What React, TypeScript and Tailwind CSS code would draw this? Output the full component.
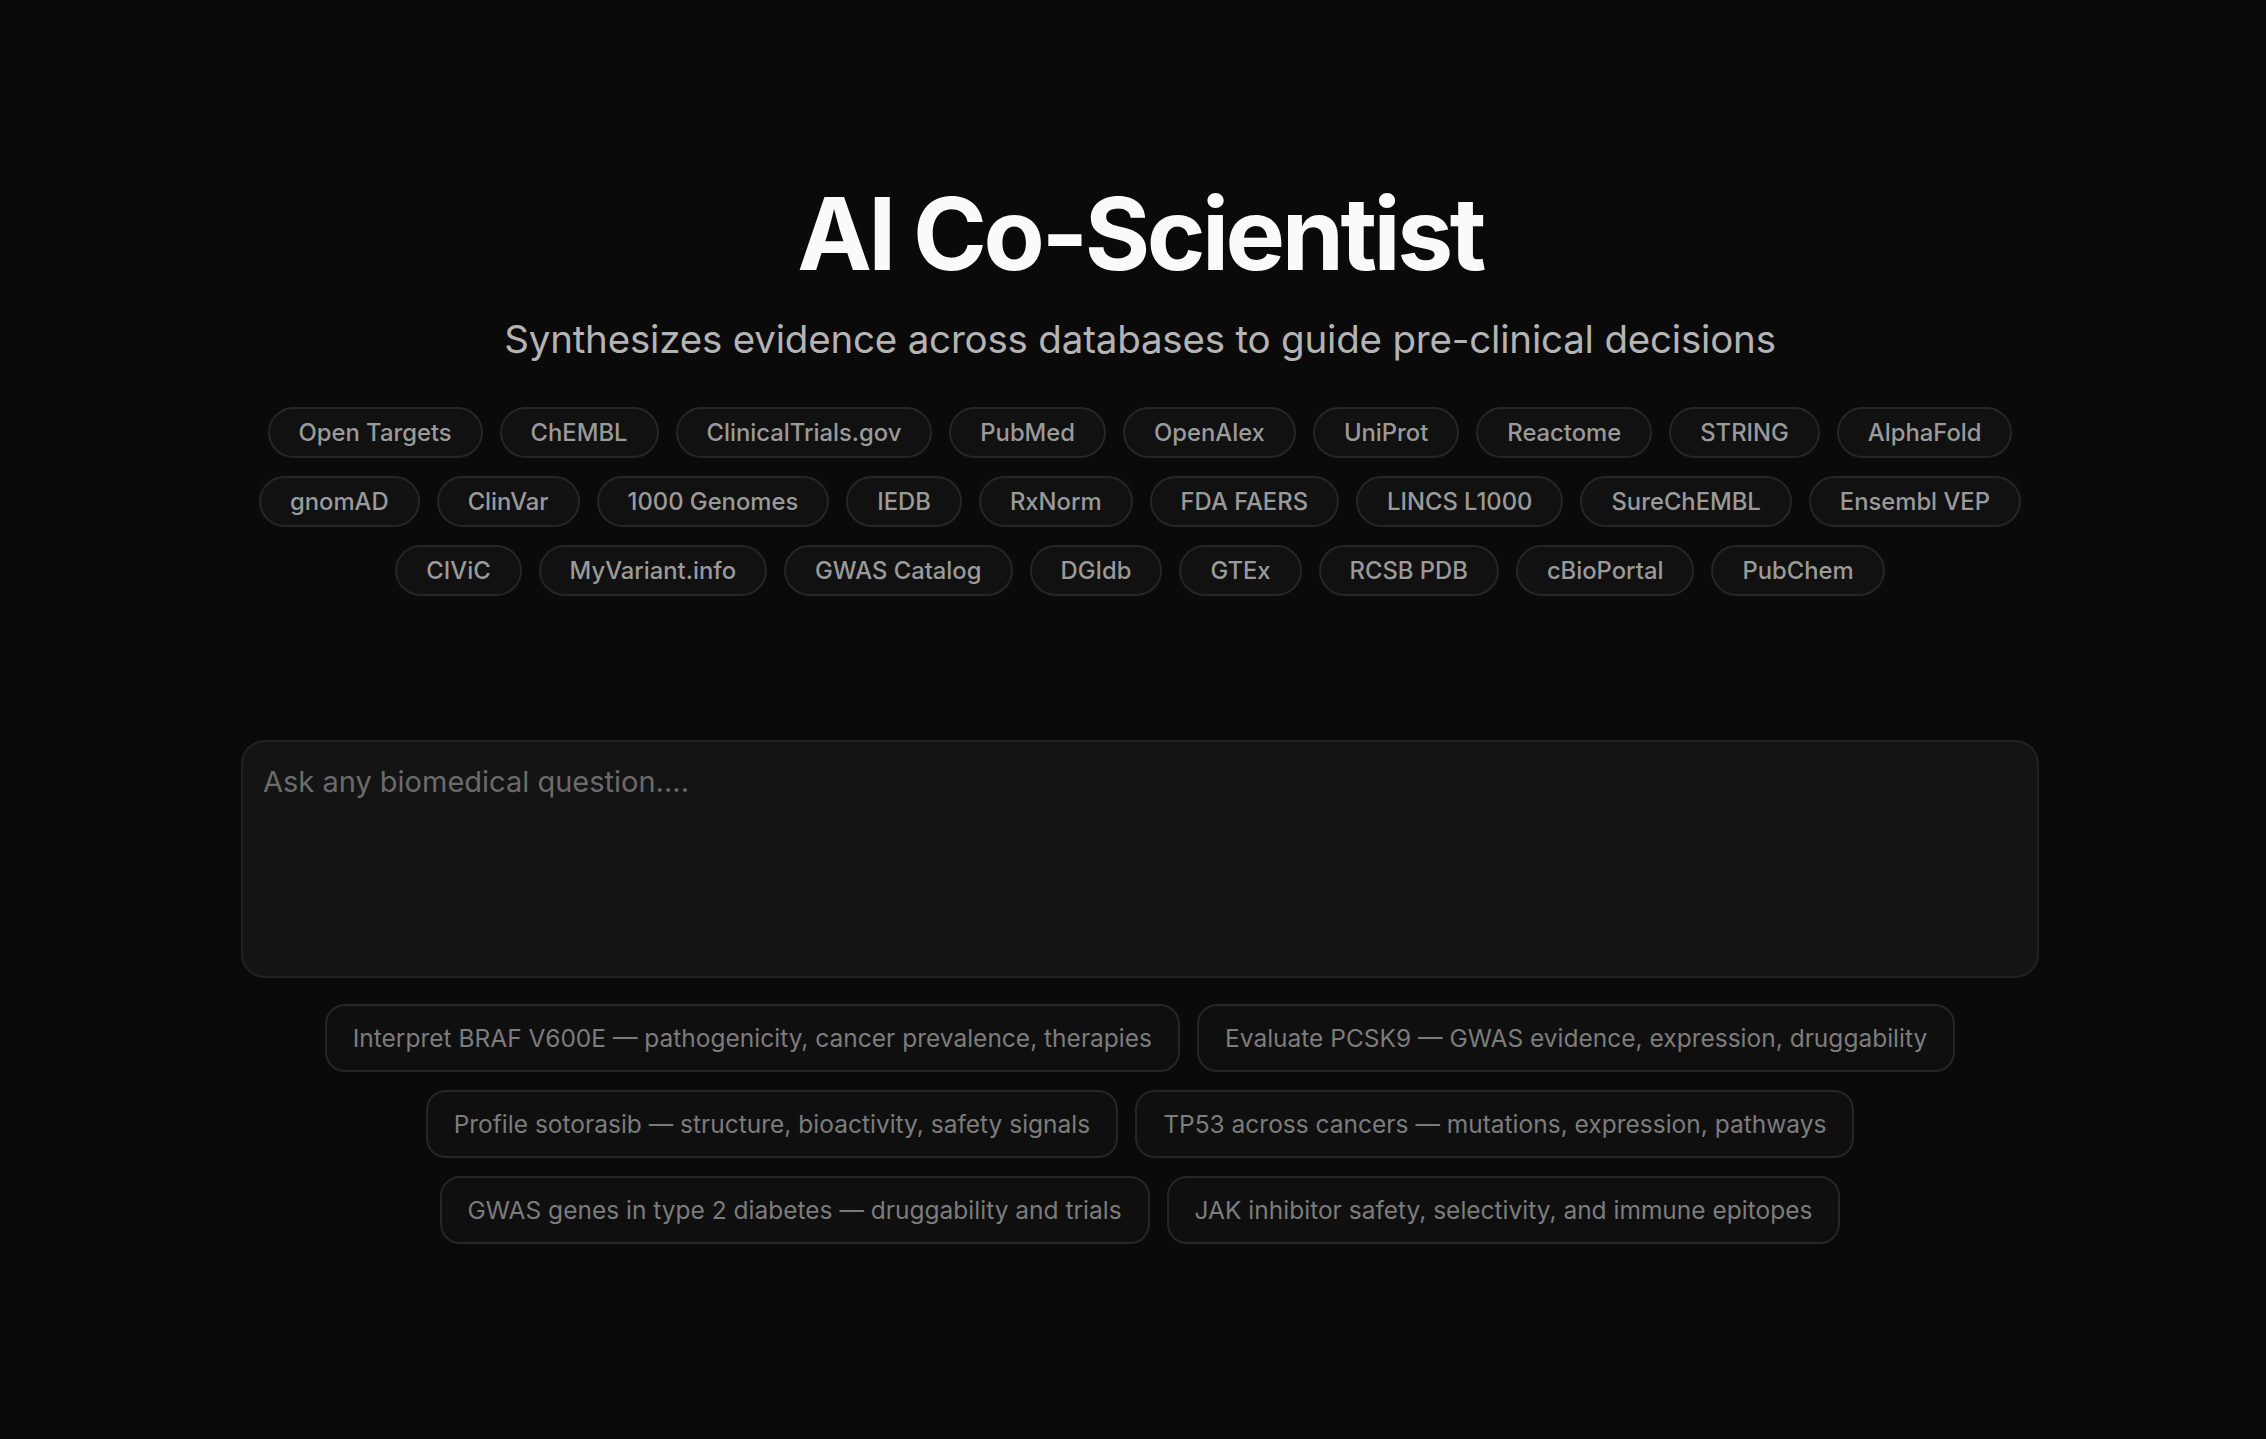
const sources = [
  ['Open Targets', 'ChEMBL', 'ClinicalTrials.gov', 'PubMed', 'OpenAlex', 'UniProt', 'Reactome', 'STRING', 'AlphaFold'],
  ['gnomAD', 'ClinVar', '1000 Genomes', 'IEDB', 'RxNorm', 'FDA FAERS', 'LINCS L1000', 'SureChEMBL', 'Ensembl VEP'],
  ['CIViC', 'MyVariant.info', 'GWAS Catalog', 'DGIdb', 'GTEx', 'RCSB PDB', 'cBioPortal', 'PubChem'],
]

const examples = [
  'Interpret BRAF V600E — pathogenicity, cancer prevalence, therapies',
  'Evaluate PCSK9 — GWAS evidence, expression, druggability',
  'Profile sotorasib — structure, bioactivity, safety signals',
  'TP53 across cancers — mutations, expression, pathways',
  'GWAS genes in type 2 diabetes — druggability and trials',
  'JAK inhibitor safety, selectivity, and immune epitopes',
]

export default function App() {
  return (
    <div className="min-h-screen bg-[#0a0a0a] font-['Inter','Liberation_Sans',sans-serif] text-white">
      <main className="mx-auto flex w-[1798px] flex-col items-center pt-[184px] pl-[14px] box-content">
        {/* Header */}
        <h1 className="text-[100px] font-bold leading-none tracking-[-0.035em] text-[#fafafa]">AI Co-Scientist</h1>
        <p className="mt-[27px] text-[38.5px] leading-[56px] tracking-[-0.005em] text-[#b4b4b4]">
          Synthesizes evidence across databases to guide pre-clinical decisions
        </p>

        {/* Data sources */}
        <div className="mt-[40px] flex flex-col items-center gap-[18px]">
          {sources.map((row, i) => (
            <div key={i} className="flex gap-[17px]">
              {row.map((s) => (
                <span
                  key={s}
                  className="flex h-[51px] items-center rounded-full border-2 border-[#262626] bg-[#111111] px-[29px] text-[23.8px] font-medium text-[#9a9a9a]"
                >
                  {s}
                </span>
              ))}
            </div>
          ))}
        </div>

        {/* Question box */}
        <textarea
          placeholder="Ask any biomedical question...."
          className="mt-[144px] h-[238px] w-full resize-none rounded-[24px] border-2 border-[#222222] bg-[#141414] p-[20px] text-[29px] leading-[40px] text-[#dddddd] outline-none placeholder:text-[#6b6b6b]"
        />

        {/* Example prompts */}
        <div className="mt-[26px] flex flex-wrap justify-center gap-x-[17px] gap-y-[18px]">
          {examples.map((e) => (
            <button
              key={e}
              className="h-[68px] rounded-[20px] border-2 border-[#262626] bg-[#0f0f0f] px-[26px] text-[24.5px] text-[#7c7c7c]"
            >
              {e}
            </button>
          ))}
        </div>
      </main>
    </div>
  )
}
